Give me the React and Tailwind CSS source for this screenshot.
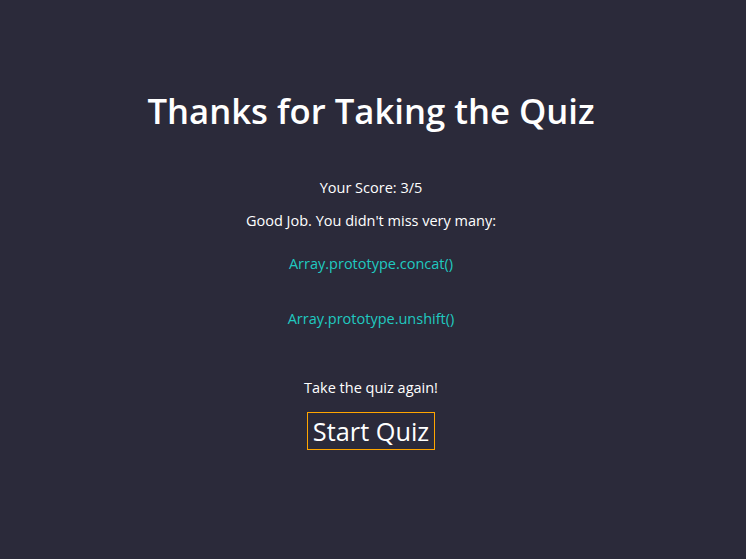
export default function App() {
  return (
    <div
      className="min-h-[559px] w-full bg-[#2b2a3a] text-white flex flex-col items-center pr-[4px]"
      style={{ fontFamily: '"Open Sans", sans-serif' }}
    >
      <h1 className="mt-[88px] text-[34.7px] leading-[46px] font-semibold">Thanks for Taking the Quiz</h1>
      <p className="mt-[44px] text-[14.5px] leading-[20px]">Your Score: 3/5</p>
      <p className="mt-[13px] text-[14.5px] leading-[20px]">Good Job. You didn't miss very many:</p>
      <p className="mt-[23px] text-[14.5px] leading-[20px] text-[#20c9c0]">Array.prototype.concat()</p>
      <p className="mt-[35px] text-[14.5px] leading-[20px] text-[#20c9c0]">Array.prototype.unshift()</p>
      <p className="mt-[49px] text-[14.5px] leading-[20px]">Take the quiz again!</p>
      <button className="mt-[14px] border border-[#ffa500] px-[5px] h-[38px] text-[25.3px] leading-[34px] text-white">
        Start Quiz
      </button>
    </div>
  );
}
